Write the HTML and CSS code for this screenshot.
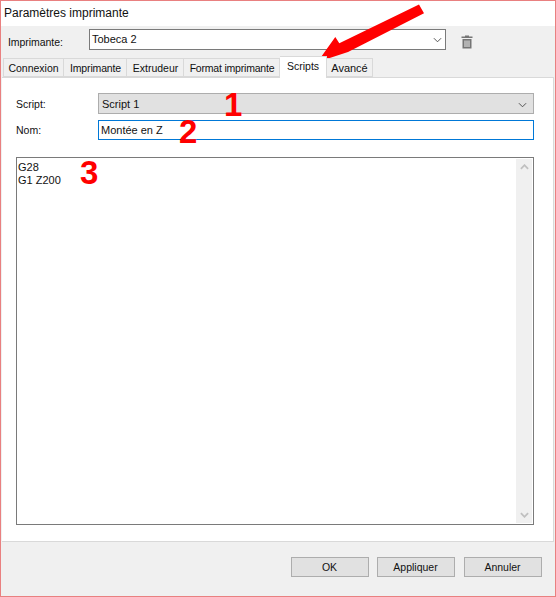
FILE: index.html
```html
<!DOCTYPE html>
<html lang="fr">
<head>
<meta charset="utf-8">
<title>Paramètres imprimante</title>
<link rel="stylesheet" href="styles.css">
</head>
<body>
<div class="window">
  <div class="titlebar">Paramètres imprimante</div>
  <div class="printer-row">
    <span class="printer-label">Imprimante:</span>
    <div class="combo printer-combo">
      <span>Tobeca 2</span>
      <svg class="chev" viewBox="0 0 10 6"><path d="M1 1l4 4 4-4" /></svg>
    </div>
    <svg class="trash" viewBox="0 0 12 14"><path d="M4 0.5h4v1h3.500v1.500H.5V1.500H4z" /><path fill-rule="evenodd" d="M1.500 4h9v9.500h-9zM3.500 5.500v6.500h1V5.500zM5.500 5.500v6.500h1V5.500zM7.500 5.500v6.500h1V5.500z" /></svg>
  </div>
  <div class="tabs">
    <div class="tab t1">Connexion</div>
    <div class="tab t2">Imprimante</div>
    <div class="tab t3">Extrudeur</div>
    <div class="tab t4">Format imprimante</div>
    <div class="tab t5 active">Scripts</div>
    <div class="tab t6">Avancé</div>
  </div>
  <div class="panel">
    <div class="form-row first">
      <span class="label">Script:</span>
      <div class="combo grey"><span>Script 1</span><svg class="chev" viewBox="0 0 10 6"><path d="M1 1l4 4 4-4" /></svg></div>
    </div>
    <div class="form-row second">
      <span class="label">Nom:</span>
      <div class="input">Montée en Z</div>
    </div>
    <div class="editor">
      <div class="code">G28<br>G1 Z200</div>
      <div class="scrollbar">
        <svg class="sb-arrow" viewBox="0 0 10 6"><path d="M1 5l4-4 4 4" /></svg>
        <svg class="sb-arrow" viewBox="0 0 10 6"><path d="M1 1l4 4 4-4" /></svg>
      </div>
    </div>
  </div>
  <div class="actions">
    <button class="btn">OK</button>
    <button class="btn">Appliquer</button>
    <button class="btn">Annuler</button>
  </div>
  <span class="mark m1">1</span>
  <span class="mark m2">2</span>
  <span class="mark m3">3</span>
  <svg class="arrow" viewBox="0 0 120 70"><path d="M109 4.500L114 13.300L38 52L7.500 62L25.300 37L29.300 43.300z" /></svg>
</div>
</body>
</html>
```
FILE: styles.css
```css
* { box-sizing: border-box; }
html, body { margin: 0; padding: 0; }
body { width: 556px; height: 597px; overflow: hidden; font-family: "Liberation Sans", Arial, sans-serif; font-size: 10.5px; color: #111; }
.window { position: relative; width: 556px; height: 597px; background: #f0f0f0; border: 1px solid #e98080; display: flex; flex-direction: column; }
.titlebar { height: 25px; flex: none; background: #fff; padding: 4px 0 0 3px; font-size: 12px; line-height: 16px; }
.printer-row { height: 28px; flex: none; display: flex; align-items: flex-start; padding-top: 3px; }
.printer-label { width: 88px; padding: 7px 0 0 7px; letter-spacing: -0.05px; }
.combo { display: flex; align-items: center; justify-content: space-between; border: 1px solid #7a7a7a; background: #fff; }
.printer-combo { width: 357px; height: 21px; padding: 0 3px 2px 2px; font-size: 11px; }
.chev { width: 9px; height: 6px; margin-top: 2px; fill: none; stroke: #444; stroke-width: 1; }
.trash { width: 12px; height: 14px; margin: 6px 0 0 15px; fill: #757575; }
.tabs { display: flex; height: 23px; flex: none; padding: 4px 0 0 2px; align-items: flex-end; position: relative; z-index: 1; white-space: nowrap; }
.tab { height: 19px; background: #f0f0f0; border: 1px solid #d9d9d9; border-left: 0; display: flex; align-items: center; justify-content: center; }
.t1 { width: 61px; border-left: 1px solid #d9d9d9; }
.t2 { width: 63px; letter-spacing: -0.15px; padding-left: 1px; }
.t3 { width: 57px; padding-left: 1px; }
.t4 { width: 96px; letter-spacing: -0.2px; padding-left: 1px; }
.t5 { width: 47px; }
.t6 { width: 46px; font-size: 11px; }
.active { height: 22px; background: #fff; border-bottom: 0; margin-bottom: -1px; padding-bottom: 3px; }
.panel { width: 552px; height: 465px; flex: none; margin-left: 1px; background: #fff; border: 1px solid #d9d9d9; border-left: 0; padding: 15px 0 0 0; display: flex; flex-direction: column; }
.form-row { display: flex; align-items: center; padding-left: 14px; }
.label { width: 82px; }
.first .combo { width: 436px; height: 21px; padding: 0 6px 0 3px; font-size: 11px; }
.grey { background: #e1e1e1; border-color: #adadad; }
.second { margin-top: 6px; }
.input { width: 436px; height: 20px; border: 1px solid #0078d7; padding: 0 2px; line-height: 18px; background: #fff; font-size: 11px; }
.editor { width: 518px; height: 368px; margin: 17px 0 0 14px; border: 1px solid #7a7a7a; display: flex; justify-content: space-between; flex: none; }
.code { padding: 3px 0 0 1px; line-height: 13px; font-size: 11px; }
.scrollbar { width: 16px; margin: 1px 1px 1px 0; background: #f0f0f0; display: flex; flex-direction: column; justify-content: space-between; align-items: center; padding: 5px 0; }
.sb-arrow { width: 9px; height: 6px; fill: none; stroke: #c0c0c0; stroke-width: 2; }
.actions { display: flex; padding: 15px 0 0 290px; }
.btn { width: 78px; height: 20px; margin-right: 8px; background: #e1e1e1; border: 1px solid #adadad; font: inherit; color: inherit; padding: 0 1px 0 0; }
.btn:last-child { margin-left: 1px; }
.mark { position: absolute; color: #f00; font-family: "Liberation Sans", sans-serif; font-weight: 700; font-size: 33px; line-height: 33px; }
.m1 { left: 223px; top: 87px; }
.m2 { left: 178px; top: 114px; }
.m3 { left: 79px; top: 155px; }
.arrow { position: absolute; left: 309px; top: -1px; width: 120px; height: 70px; fill: #f00; }
```
